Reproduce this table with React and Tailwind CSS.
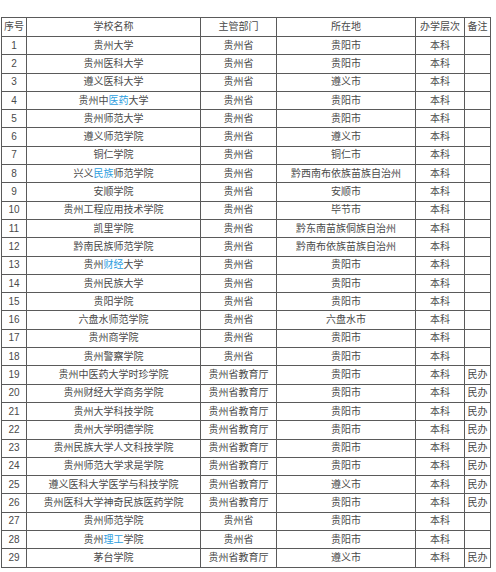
import React from "react";

const rows = [
  ["1", "贵州大学", "贵州省", "贵阳市", "本科", ""],
  ["2", "贵州医科大学", "贵州省", "贵阳市", "本科", ""],
  ["3", "遵义医科大学", "贵州省", "遵义市", "本科", ""],
  ["4", ["贵州中", "医药", "大学"], "贵州省", "贵阳市", "本科", ""],
  ["5", "贵州师范大学", "贵州省", "贵阳市", "本科", ""],
  ["6", "遵义师范学院", "贵州省", "遵义市", "本科", ""],
  ["7", "铜仁学院", "贵州省", "铜仁市", "本科", ""],
  ["8", ["兴义", "民族", "师范学院"], "贵州省", "黔西南布依族苗族自治州", "本科", ""],
  ["9", "安顺学院", "贵州省", "安顺市", "本科", ""],
  ["10", "贵州工程应用技术学院", "贵州省", "毕节市", "本科", ""],
  ["11", "凯里学院", "贵州省", "黔东南苗族侗族自治州", "本科", ""],
  ["12", "黔南民族师范学院", "贵州省", "黔南布依族苗族自治州", "本科", ""],
  ["13", ["贵州", "财经", "大学"], "贵州省", "贵阳市", "本科", ""],
  ["14", "贵州民族大学", "贵州省", "贵阳市", "本科", ""],
  ["15", "贵阳学院", "贵州省", "贵阳市", "本科", ""],
  ["16", "六盘水师范学院", "贵州省", "六盘水市", "本科", ""],
  ["17", "贵州商学院", "贵州省", "贵阳市", "本科", ""],
  ["18", "贵州警察学院", "贵州省", "贵阳市", "本科", ""],
  ["19", "贵州中医药大学时珍学院", "贵州省教育厅", "贵阳市", "本科", "民办"],
  ["20", "贵州财经大学商务学院", "贵州省教育厅", "贵阳市", "本科", "民办"],
  ["21", "贵州大学科技学院", "贵州省教育厅", "贵阳市", "本科", "民办"],
  ["22", "贵州大学明德学院", "贵州省教育厅", "贵阳市", "本科", "民办"],
  ["23", "贵州民族大学人文科技学院", "贵州省教育厅", "贵阳市", "本科", "民办"],
  ["24", "贵州师范大学求是学院", "贵州省教育厅", "贵阳市", "本科", "民办"],
  ["25", "遵义医科大学医学与科技学院", "贵州省教育厅", "遵义市", "本科", "民办"],
  ["26", "贵州医科大学神奇民族医药学院", "贵州省教育厅", "贵阳市", "本科", "民办"],
  ["27", "贵州师范学院", "贵州省", "贵阳市", "本科", ""],
  ["28", ["贵州", "理工", "学院"], "贵州省", "贵阳市", "本科", ""],
  ["29", "茅台学院", "贵州省教育厅", "遵义市", "本科", "民办"],
];

const header = ["序号", "学校名称", "主管部门", "所在地", "办学层次", "备注"];

function Cell({ value }) {
  if (Array.isArray(value)) {
    return (
      <div className="bg-white flex items-center justify-center whitespace-nowrap">
        {value[0]}
        <span className="text-[#2fa0e0]">{value[1]}</span>
        {value[2]}
      </div>
    );
  }
  return (
    <div className="bg-white flex items-center justify-center whitespace-nowrap">
      {value}
    </div>
  );
}

export default function App() {
  return (
    <div className="w-[496px] h-[572px] bg-white pt-[17px] pl-px">
      <div
        className="grid w-[490px] gap-px p-px bg-[#5a5a5a] text-[10px] leading-none text-[#4a4a4a] grid-cols-[24px_173px_75px_138px_48px_25px] grid-rows-[18px_repeat(29,17.3px)]"
        style={{ fontFamily: '"Liberation Sans", "Noto Sans CJK SC", sans-serif' }}
      >
        {header.map((h) => (
          <Cell key={h} value={h} />
        ))}
        {rows.map((r) =>
          r.map((v, i) => <Cell key={r[0] + "-" + i} value={v} />)
        )}
      </div>
    </div>
  );
}
